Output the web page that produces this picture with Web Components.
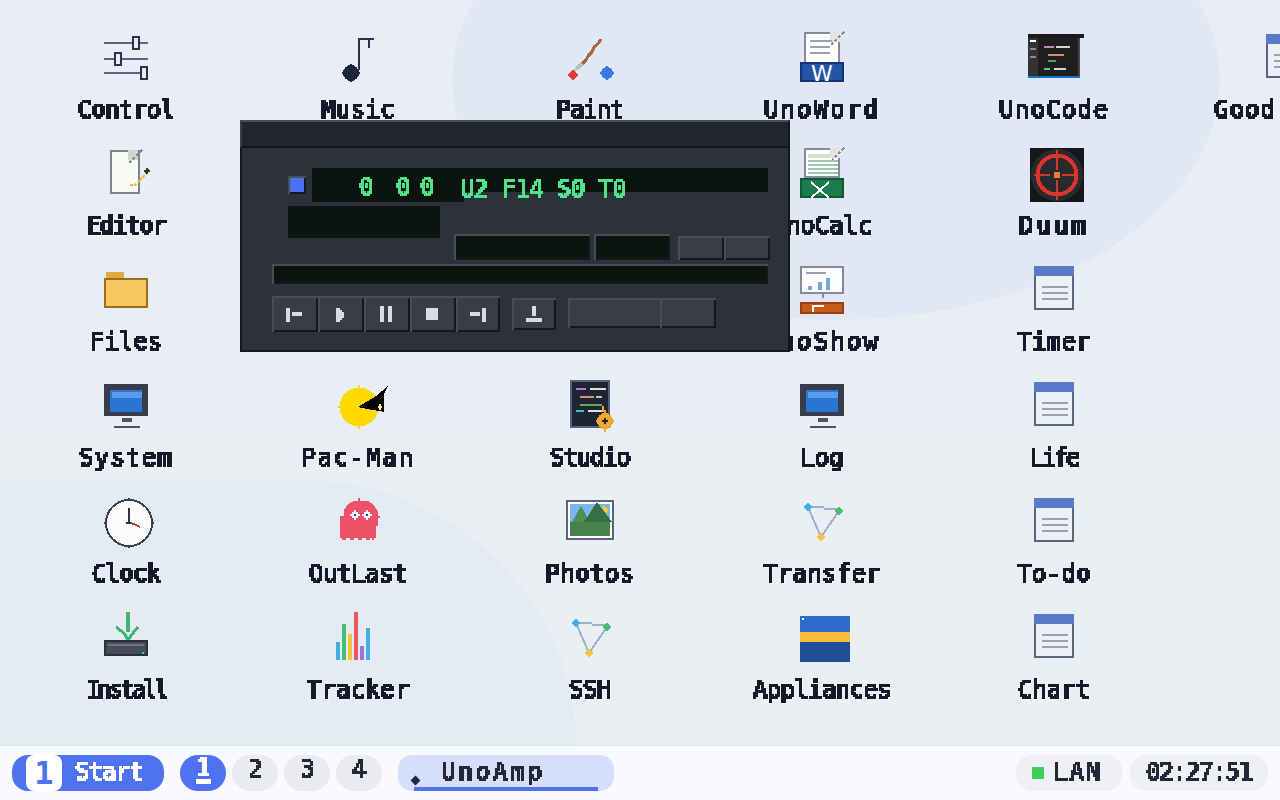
<!DOCTYPE html>
<html>
<head>
<meta charset="utf-8">
<title>UnoAmp</title>
<style>
  html, body { margin: 0; height: 100%; overflow: hidden; }
  body { display: flex; flex-direction: column; width: 1280px; height: 800px; font-family: "DejaVu Sans Mono", monospace; }
</style>
</head>
<body>
<uno-desktop>
  <desk-icon icon="control" label="Control"></desk-icon>
  <desk-icon icon="music" label="Music"></desk-icon>
  <desk-icon icon="paint" label="Paint"></desk-icon>
  <desk-icon icon="word" label="UnoWord"></desk-icon>
  <desk-icon icon="code" label="UnoCode"></desk-icon>
  <desk-icon icon="doc" label="Good" style="--label-end:82px"></desk-icon>

  <desk-icon icon="editor" label="Editor" style="grid-column:1"></desk-icon>
  <desk-icon icon="calc" label="UnoCalc" style="grid-column:4"></desk-icon>
  <desk-icon icon="duum" label="Duum"></desk-icon>

  <desk-icon icon="files" label="Files" style="grid-column:1"></desk-icon>
  <desk-icon icon="show" label="UnoShow" style="grid-column:4"></desk-icon>
  <desk-icon icon="doc" label="Timer"></desk-icon>

  <desk-icon icon="monitor" label="System" style="grid-column:1"></desk-icon>
  <desk-icon icon="pacman" label="Pac-Man"></desk-icon>
  <desk-icon icon="studio" label="Studio"></desk-icon>
  <desk-icon icon="monitor" label="Log"></desk-icon>
  <desk-icon icon="doc" label="Life"></desk-icon>

  <desk-icon icon="clock" label="Clock" style="grid-column:1"></desk-icon>
  <desk-icon icon="ghost" label="OutLast"></desk-icon>
  <desk-icon icon="photos" label="Photos"></desk-icon>
  <desk-icon icon="nodes" label="Transfer"></desk-icon>
  <desk-icon icon="doc" label="To-do"></desk-icon>

  <desk-icon icon="install" label="Install" style="grid-column:1"></desk-icon>
  <desk-icon icon="tracker" label="Tracker"></desk-icon>
  <desk-icon icon="nodes" label="SSH"></desk-icon>
  <desk-icon icon="appliances" label="Appliances"></desk-icon>
  <desk-icon icon="doc" label="Chart"></desk-icon>

  <amp-window></amp-window>
</uno-desktop>
<uno-taskbar></uno-taskbar>

<script>
// 2px sampling filter, gives the text the blocky low-res look of the original
const PIXEL_DEFS = `
  <svg width="0" height="0" style="display:block;width:0;height:0" aria-hidden="true">
    <filter id="px" x="-5%" y="-5%" width="110%" height="110%" primitiveUnits="userSpaceOnUse" color-interpolation-filters="sRGB">
      <feFlood x="1" y="1" width="1" height="1"/>
      <feComposite width="2" height="2"/>
      <feTile result="grid"/>
      <feComposite in="SourceGraphic" in2="grid" operator="in"/>
      <feComponentTransfer><feFuncA type="discrete" tableValues="0 1 1"/></feComponentTransfer>
      <feMorphology operator="dilate" radius="1"/>
    </filter>
    <filter id="pxb" x="-5%" y="-5%" width="110%" height="110%" primitiveUnits="userSpaceOnUse" color-interpolation-filters="sRGB">
      <feFlood x="1" y="1" width="1" height="1"/>
      <feComposite width="2" height="2"/>
      <feTile result="grid"/>
      <feComposite in="SourceGraphic" in2="grid" operator="in"/>
      <feComponentTransfer><feFuncA type="discrete" tableValues="0 1 1 1 1 1"/></feComponentTransfer>
      <feMorphology operator="dilate" radius="1"/>
    </filter>
  </svg>`;

const r = (x, y, w, h, c) => `<rect x="${x}" y="${y}" width="${w}" height="${h}" fill="${c}"/>`;
const dot = (x, y, s, c) => `<circle cx="${x}" cy="${y}" r="${s}" fill="${c}"/>` + r(x - s - 1, y - 1, 2 * s + 2, 2, c) + r(x - 1, y - s - 1, 2, 2 * s + 2, c);
const line = (pts, c, w = 2, dash = "") => `<polyline points="${pts}" fill="none" stroke="${c}" stroke-width="${w}" ${dash ? `stroke-dasharray="${dash}"` : ""}/>`;

const paper = (x, y, w, h) => r(x, y, w, h, "#858b9b") + r(x + 2, y + 2, w - 4, h - 4, "#ffffff");

// the original font is proportional, so every label gets its own tracking
const TRACK = {
  Music: .8, Paint: -.6, UnoWord: 2.7, UnoCode: 1.7, Good: 1.5, Editor: -.8, UnoCalc: .3, Duum: 3.5, Files: .4,
  UnoShow: 2.6, Timer: .8, System: 1.7, "Pac-Man": 2.3, Studio: -.7, Log: .7, Life: -2, Clock: -.4, Photos: .8,
  Transfer: .75, "To-do": .8, Install: -2.6, Tracker: .7, Appliances: -.2, Chart: .4, Control: -.15
};

// each icon: origin of its 64x64 box in the screenshot + what is drawn there
const ICONS = {
  control: [93, 26,
    r(104, 42, 44, 2, "#5b6478") + r(104, 58, 44, 2, "#5b6478") + r(104, 72, 44, 2, "#5b6478") +
    r(132, 36, 8, 14, "#2c3348") + r(134, 38, 4, 10, "#e8edf7") +
    r(114, 52, 8, 14, "#2c3348") + r(116, 54, 4, 10, "#e8edf7") +
    r(140, 66, 8, 14, "#2c3348") + r(142, 68, 4, 10, "#e8edf7")],
  music: [325, 26,
    r(358, 38, 2, 32, "#2c3348") + r(358, 38, 16, 2, "#2c3348") + r(368, 40, 2, 8, "#2c3348") + dot(351, 73, 8, "#1c2540")],
  paint: [557, 26,
    line("601,39 598,44 594,47 592,52 588,56 586,60 582,64", "#a8683a", 3) + line("582,64 576,69", "#b9bcc4", 4) + line("576,69 574,72", "#b9bcc4", 2) +
    dot(573, 75, 4, "#e03a3f") + dot(607, 73, 6, "#3d78ea")],
  word: [789, 26,
    paper(804, 32, 36, 32) + r(830, 32, 10, 10, "#e3e5dc") + r(810, 40, 22, 2, "#9aa0ae") + r(810, 46, 20, 2, "#9aa0ae") + r(810, 52, 20, 2, "#9aa0ae") +
    line("844,32 830,46", "#858b9b", 2, "3 2") +
    r(800, 62, 44, 20, "#133578") + r(802, 64, 40, 16, "#2454a6") +
    `<text x="822" y="81" text-anchor="middle" font-family="DejaVu Sans" font-size="22" fill="#fff">W</text>`],
  code: [1021, 26,
    r(1028, 34, 52, 44, "#1e1e1e") + r(1028, 34, 56, 4, "#1b1b1b") + r(1028, 38, 10, 38, "#333333") + r(1078, 38, 2, 38, "#444444") + r(1028, 76, 52, 2, "#0a78d0") +
    r(1030, 40, 6, 2, "#ffffff") + r(1030, 48, 6, 2, "#8a8a8a") + r(1030, 56, 6, 2, "#8a8a8a") +
    r(1044, 46, 10, 2, "#c586c0") + r(1056, 46, 14, 2, "#d4d4d4") + r(1048, 54, 16, 2, "#ce9178") + r(1048, 60, 8, 2, "#6a9955") + r(1044, 68, 6, 2, "#4ec9b0") + r(1054, 68, 12, 2, "#d4d4d4")],
  doc: [1021, 258,
    r(1034, 266, 40, 44, "#5b6580") + r(1036, 276, 36, 32, "#edf0f6") + r(1034, 266, 40, 10, "#5a7ac8") +
    r(1042, 286, 26, 2, "#98a2b6") + r(1042, 292, 26, 2, "#98a2b6") + r(1042, 298, 26, 2, "#98a2b6")],
  editor: [93, 142,
    r(110, 150, 30, 44, "#7d8290") + r(112, 152, 26, 40, "#f9fbf5") + r(128, 150, 10, 10, "#d3d4ce") +
    line("142,150 128,164", "#7d8290", 2, "3 2") + line("130,185 135,185 146,174", "#f2b738", 2, "3 1") + dot(147, 171, 2, "#333333")],
  calc: [789, 142,
    paper(804, 148, 36, 30) + r(808, 154, 30, 4, "#cde3d5") + r(808, 160, 30, 2, "#9cc8ac") + r(808, 164, 30, 2, "#9cc8ac") + r(808, 168, 30, 2, "#9cc8ac") + r(808, 172, 30, 2, "#9cc8ac") +
    r(830, 148, 10, 10, "#e3e5dc") + line("844,148 832,160", "#858b9b", 2, "3 2") +
    r(800, 178, 44, 20, "#0f5a36") + r(802, 180, 40, 16, "#1a7c4c") + line("811,182 829,198", "#fff") + line("829,182 811,198", "#fff")],
  duum: [1021, 142,
    r(1030, 148, 54, 54, "#17171a") + `<circle cx="1057" cy="175" r="26" fill="#2a2a2e"/>` +
    `<circle cx="1057" cy="175" r="19.5" fill="none" stroke="#d9352a" stroke-width="4"/>` +
    r(1056, 150, 2, 20, "#d9352a") + r(1056, 180, 2, 20, "#d9352a") + r(1034, 174, 16, 2, "#d9352a") + r(1062, 174, 16, 2, "#d9352a") + r(1054, 172, 6, 6, "#ee7d35")],
  files: [93, 258,
    r(106, 272, 18, 6, "#dcaa3e") + r(104, 278, 44, 30, "#9b6d1c") + r(106, 280, 40, 26, "#f6c85f")],
  show: [789, 258,
    r(800, 266, 44, 28, "#858b9b") + r(802, 268, 40, 24, "#fdfdfd") + r(806, 272, 20, 2, "#9aa0ae") +
    r(808, 286, 4, 4, "#74a8dc") + r(818, 282, 4, 8, "#74a8dc") + r(826, 278, 4, 12, "#74a8dc") + r(822, 294, 2, 4, "#858b9b") +
    r(800, 302, 44, 12, "#9a3f10") + r(802, 304, 40, 8, "#c65a18") + r(812, 305, 2, 7, "#fff") + r(812, 305, 12, 2, "#fff")],
  monitor: [93, 374,
    r(104, 384, 44, 32, "#383c4c") + r(110, 390, 32, 22, "#2a75d3") + r(112, 392, 30, 6, "#5b9ceb") + r(122, 418, 10, 4, "#4d5363") + r(114, 426, 26, 2, "#4d5363")],
  pacman: [325, 374,
    `<circle cx="359" cy="407" r="19.5" fill="#ffda00"/>` + r(358, 385, 2, 44, "#ffda00") + r(338, 406, 2, 2, "#ffda00") +
    `<polygon points="358,407 376,396 388,386 384,394 384,412 380,411 372,410" fill="#000"/>` + r(378, 406, 4, 2, "#ffe9a0") + r(379, 404, 2, 6, "#ffe9a0")],
  studio: [557, 374,
    r(570, 380, 40, 48, "#565f7c") + r(572, 382, 36, 44, "#1e2433") +
    r(576, 388, 10, 2, "#b97cc0") + r(590, 388, 16, 2, "#dfe3e0") + r(580, 396, 14, 2, "#d89078") + r(596, 396, 6, 2, "#a8d89a") +
    r(580, 404, 22, 2, "#6ea55a") + r(576, 410, 8, 2, "#3dc9b0") + r(588, 410, 14, 2, "#dfe3e0") + r(602, 406, 2, 6, "#f0a830") +
    dot(605, 421, 8, "#f0a830") + r(596, 420, 18, 2, "#f0a830") + r(604, 410, 2, 22, "#f0a830") + r(602, 420, 6, 2, "#222") + r(604, 418, 2, 6, "#222")],
  clock: [93, 490,
    `<circle cx="129" cy="523" r="23" fill="#fbfbfb" stroke="#384058" stroke-width="2"/>` +
    r(128, 498, 2, 2, "#384058") + r(128, 546, 2, 2, "#384058") + r(104, 522, 2, 2, "#384058") + r(152, 522, 2, 2, "#384058") +
    r(128, 508, 2, 16, "#2c3348") + r(126, 522, 6, 2, "#2c3348") + line("131,523 136,525 140,527", "#c0392b")],
  ghost: [325, 490,
    `<path d="M344 516V510L348 504L354 501H368L374 505L378 512V526H376V538H340V516Z" fill="#ee5068"/>` +
    r(358, 498, 2, 4, "#ee5068") + r(378, 516, 2, 2, "#ee5068") + r(342, 538, 4, 2, "#ee5068") + r(350, 538, 4, 2, "#ee5068") + r(358, 538, 4, 2, "#ee5068") + r(366, 538, 4, 2, "#ee5068") + r(372, 538, 2, 2, "#ee5068") +
    r(350, 514, 10, 2, "#fff") + r(354, 510, 2, 10, "#fff") + r(352, 512, 6, 6, "#fff") + r(362, 514, 10, 2, "#fff") + r(366, 510, 2, 10, "#fff") + r(364, 512, 6, 6, "#fff") +
    r(354, 514, 2, 2, "#2040b0") + r(366, 514, 2, 2, "#2040b0")],
  photos: [557, 490,
    r(566, 500, 48, 40, "#5a6480") + r(568, 502, 44, 36, "#ffffff") + r(570, 504, 40, 32, "#7ab5ec") +
    `<polygon points="581,506 572,522 590,522" fill="#4e8f58"/>` + `<polygon points="597,502 584,522 612,522" fill="#366f45"/>` +
    r(570, 522, 40, 14, "#47824e") + line("603,507 608,512", "#f2c83c", 3)],
  nodes: [789, 490,
    line("808,507 824,507", "#a0b0cc") + line("824,509 839,509", "#a0b0cc") + line("839,511 821,537", "#a0b0cc", 2) + line("808,507 821,537", "#a0b0cc", 2) +
    dot(808, 507, 3, "#3fb0e0") + dot(839, 511, 3, "#45c070") + dot(821, 537, 3, "#f2c63c")],
  install: [93, 606,
    r(126, 612, 4, 20, "#3fb86e") + line("116,627 124,633 128,640 134,632 138,627", "#3fb86e", 3) +
    r(104, 640, 44, 16, "#2a2f3f") + r(106, 642, 40, 12, "#474b5c") + r(108, 644, 36, 2, "#6f7383") + r(142, 652, 2, 2, "#3fd86e")],
  tracker: [325, 606,
    r(336, 642, 4, 18, "#3fb0e0") + r(342, 624, 4, 36, "#45c070") + r(348, 634, 4, 26, "#f2c63c") + r(354, 612, 4, 48, "#ea5a5a") + r(360, 646, 4, 14, "#a46ee0") + r(366, 628, 4, 32, "#3fb0e0")],
  appliances: [789, 606,
    r(800, 616, 50, 16, "#2a6cc8") + r(800, 632, 50, 10, "#fcbc38") + r(800, 642, 50, 20, "#1f5096") + r(802, 618, 2, 2, "#ffffff")]
};

class UnoDesktop extends HTMLElement {
  constructor() {
    super();
    this.attachShadow({ mode: "open" }).innerHTML = `
      <style>
        :host {
          display: grid;
          position: relative;
          flex: none;
          box-sizing: border-box;
          width: 1280px;
          height: 745px;
          padding: 20px 0 0 9px;
          overflow: hidden;
          grid-template-columns: repeat(6, 232px);
          grid-auto-rows: 116px;
          background:
            radial-gradient(384px 240px at 836px 80px, #e1e7f5 99.8%, transparent 100%),
            linear-gradient(#e8edf7, #eaeff2);
        }
        .blob {
          position: absolute;
          left: -200px;
          top: 480px;
          width: 776px;
          height: 300px;
          background: #e5ebf4;
          border-radius: 300px 276px 0 0 / 30px 265px 0 0;
        }
      </style>
      <div class="blob"></div>
      <slot></slot>`;
  }
}

class DeskIcon extends HTMLElement {
  constructor() {
    super();
    this.attachShadow({ mode: "open" });
  }
  connectedCallback() {
    const [ox, oy, art] = ICONS[this.getAttribute("icon")];
    const label = this.getAttribute("label");
    this.shadowRoot.innerHTML = `
      <style>
        :host { display: flex; flex-direction: column; align-items: center; padding-top: 6px; color: #141a2b; position: relative; }
        svg.art { display: block; width: 64px; height: 64px; flex: none; overflow: visible; }
        .label {
          margin-top: 8px;
          padding-left: 2px;
          margin-right: var(--label-end, 0);
          font: 400 24px/24px "DejaVu Sans Mono", monospace;
          letter-spacing: ${-.45 + (TRACK[label] || 0)}px;
          white-space: nowrap;
          filter: url(#pxb) drop-shadow(1px 1px 0 rgba(255, 255, 255, .45));
        }
      </style>
      ${PIXEL_DEFS}
      <svg class="art" viewBox="${ox} ${oy} 64 64" shape-rendering="crispEdges">${art}</svg>
      <div class="label">${label}</div>`;
  }
}

class AmpWindow extends HTMLElement {
  constructor() {
    super();
    const key = (w, svg = "") => `<div class="key" style="width:${w}px">${svg}</div>`;
    const ink = "#d8dbe4";
    const glyph = (x, art) => `<svg viewBox="${x} 296 46 36" width="46" height="36" shape-rendering="crispEdges">${art}</svg>`;
    this.attachShadow({ mode: "open" }).innerHTML = `
      <style>
        :host {
          display: block;
          position: absolute;
          left: 240px;
          top: 120px;
          width: 550px;
          height: 232px;
          font: 400 24px/24px "DejaVu Sans Mono", monospace;
          --up: inset 2px 2px 0 #4a4d58, inset -2px -2px 0 #15171c;
        }
        .title {
          height: 28px;
          box-sizing: border-box;
          background: #22252c;
          border-top: 2px solid #4a4d58;
          border-left: 2px solid #3a3d48;
          border-right: 2px solid #15171c;
          border-bottom: 2px solid #15171c;
        }
        .body {
          box-sizing: border-box;
          height: 204px;
          padding: 20px 0 0 30px;
          background: #2e313b;
          border: 2px solid #15171c;
          border-top: 0;
        }
        .row { display: flex; }
        .led { width: 18px; height: 18px; box-sizing: border-box; margin: 8px 6px 0 16px; background: #4a6ff0; box-shadow: var(--up); }
        .display {
          display: flex;
          width: 456px;
          height: 34px;
          padding-left: 47px;
          box-sizing: border-box;
          color: #4fe38c;
          background:
            linear-gradient(#0b140e, #0b140e) 0 0 / 456px 24px no-repeat,
            linear-gradient(#0b140e, #0b140e) 0 0 / 152px 34px no-repeat;
        }
        .display span { filter: url(#px); white-space: pre; letter-spacing: -.45px; margin-top: 7px; height: 24px; }
        .display .info { margin: 9px 0 0 26px; letter-spacing: -.6px; }
        .lcd { background: #0b140e; }
        .inset { background: #0b140e; box-shadow: var(--up); height: 26px; }
        .screen { width: 152px; height: 32px; margin-left: 16px; }
        .slots { display: flex; align-items: flex-end; margin: 28px 0 0 14px; height: 26px; }
        .key { flex: none; box-sizing: border-box; height: 24px; background: #3a3d48; box-shadow: var(--up); }
        .key svg { display: block; }
        .bar { width: 496px; height: 20px; margin-top: 4px; }
        .transport { margin-top: 12px; align-items: flex-start; }
        .transport .key { height: 36px; }
        .transport .eject { height: 32px; margin: 2px 0 0 12px; }
        .eject svg { margin-top: -2px; }
        .volume { display: flex; height: 30px; margin: 2px 0 0 12px; background: #3a3d48; box-shadow: var(--up); width: 148px; }
        .volume i { margin-left: 92px; width: 2px; background: #4a4d58; }
      </style>
      ${PIXEL_DEFS}
      <div class="title"></div>
      <div class="body">
        <div class="row">
          <div class="led"></div>
          <div class="display"><span>0</span><span style="margin-left:23px">0</span><span style="margin-left:10px">0</span><span class="info">U2 F14 S0 T0</span></div>
        </div>
        <div class="row" style="margin-top:4px;height:54px">
          <div class="lcd screen"></div>
          <div class="slots">
            <div class="inset" style="width:136px"></div>
            <div class="inset" style="width:76px;margin:0 8px 0 4px"></div>
            ${key(46)}${key(46)}
          </div>
        </div>
        <div class="inset bar"></div>
        <div class="row transport">
          ${key(46, glyph(272, r(286, 308, 4, 14, ink) + r(292, 312, 10, 4, ink)))}
          ${key(46, glyph(318, r(336, 308, 4, 14, ink) + r(340, 310, 2, 10, ink) + r(342, 312, 2, 6, ink)))}
          ${key(46, glyph(364, r(380, 306, 4, 16, ink) + r(388, 306, 4, 16, ink)))}
          ${key(46, glyph(410, r(426, 308, 12, 12, ink)))}
          ${key(44, glyph(456, r(470, 312, 10, 4, ink) + r(482, 308, 4, 14, ink)))}
          <div class="key eject" style="width:44px">${glyph(512, r(532, 306, 4, 10, ink) + r(526, 318, 16, 4, ink))}</div>
          <div class="volume"><i></i></div>
        </div>
      </div>`;
  }
}

class UnoTaskbar extends HTMLElement {
  constructor() {
    super();
    this.attachShadow({ mode: "open" }).innerHTML = `
      <style>
        :host {
          display: flex;
          flex: none;
          box-sizing: border-box;
          width: 1280px;
          height: 55px;
          padding: 9px 12px 0;
          align-items: flex-start;
          background: #f9fafe;
          border-top: 1px solid #e0e4ee;
          color: #232838;
          font: 400 24px/36px "DejaVu Sans Mono", monospace;
        }
        .pill { flex: none; height: 36px; border-radius: 16px; display: flex; align-items: center; box-sizing: border-box; }
        .txt { filter: url(#px); white-space: pre; letter-spacing: -.9px; }
        .start { width: 152px; margin-right: 16px; background: #4f72f0; color: #fff; padding-left: 14px; overflow: hidden; }
        .start .txt { margin-top: -2px; }
        .logo { width: 36px; height: 36px; background: #fff; color: #4f72f0; text-align: center; font-weight: 700; font-size: 32px; border-radius: 8px; margin-right: 13px; }
        .ws { width: 46px; margin-right: 6px; justify-content: center; background: #e9ebf0; border-radius: 18px; }
        .ws .txt { margin-top: -8px; }
        .ws.on { background: #4f72f0; color: #fff; }
        .ws.on .txt { align-self: flex-start; margin-top: 2px; border-bottom: 4px solid #fff; line-height: 22px; }
        .task { position: relative; width: 216px; margin-left: 10px; padding-left: 43px; background: #d6dffa; border-radius: 14px; }
        .task .txt { letter-spacing: 2.9px; margin-top: -2px; }
        .mark { position: absolute; left: 14px; top: 22px; width: 7px; height: 7px; background: #232838; transform: rotate(45deg); }
        .task u { position: absolute; left: 16px; right: 16px; bottom: 0; height: 4px; background: #4f72f0; }
        .gap { flex: 1; }
        .net { width: 106px; background: #eff0f4; padding-left: 16px; margin-right: 8px; }
        .net b { width: 12px; height: 12px; margin-right: 9px; background: #3ccf5c; }
        .net .txt { letter-spacing: 2.1px; margin-top: -2px; }
        .time { width: 138px; background: #eff0f4; justify-content: center; }
        .time .txt { letter-spacing: -1.2px; margin-top: -2px; }
      </style>
      ${PIXEL_DEFS}
      <div class="pill start"><div class="logo">1</div><span class="txt">Start</span></div>
      <div class="pill ws on"><span class="txt">1</span></div>
      <div class="pill ws"><span class="txt">2</span></div>
      <div class="pill ws"><span class="txt">3</span></div>
      <div class="pill ws"><span class="txt">4</span></div>
      <div class="pill task"><i class="mark"></i><span class="txt">UnoAmp</span><u></u></div>
      <div class="gap"></div>
      <div class="pill net"><b></b><span class="txt">LAN</span></div>
      <div class="pill time"><span class="txt">02:27:51</span></div>`;
  }
}

customElements.define("desk-icon", DeskIcon);
customElements.define("amp-window", AmpWindow);
customElements.define("uno-taskbar", UnoTaskbar);
customElements.define("uno-desktop", UnoDesktop);
</script>
</body>
</html>
